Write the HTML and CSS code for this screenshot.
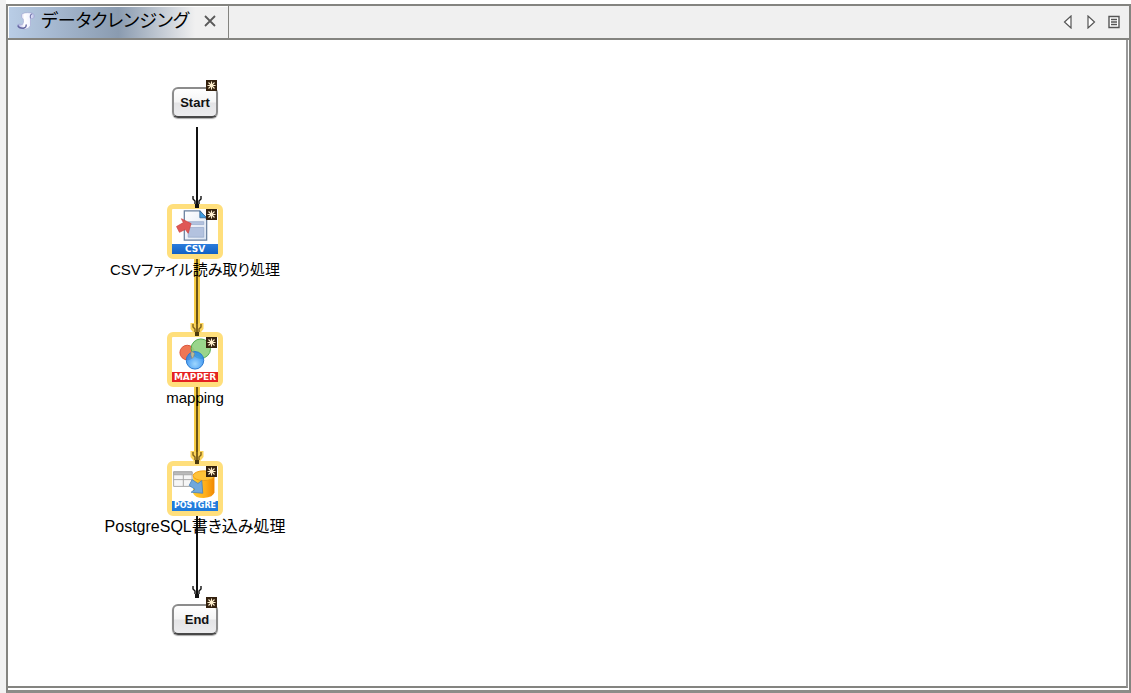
FILE: index.html
```html
<!DOCTYPE html>
<html lang="ja">
<head>
<meta charset="utf-8">
<title>データクレンジング</title>
<link rel="stylesheet" href="styles.css">
</head>
<body>
<main class="frame">
  <header class="tabbar">
    <div class="tab">
      <svg class="scroll-icon" width="18" height="20" viewBox="0 0 20 20" aria-hidden="true">
        <defs><linearGradient id="scroll" x1="0" x2="1"><stop offset="0" stop-color="#a3a5df"/><stop offset=".4" stop-color="#fff"/><stop offset=".7" stop-color="#f4f5ff"/><stop offset="1" stop-color="#b9bde8"/></linearGradient></defs>
        <path d="M5 3Q7 0 16 1Q20 2 19 6Q18 8 15 7L15 15Q13 19 9 19L3 18Q0 17 1 14Q2 13 6 14Q8 12 7 8Q4 6 5 3Z" fill="url(#scroll)" stroke="#9da1cf" stroke-width=".6"/>
        <path d="M15 7Q14 3 17 2" fill="none" stroke="#7376ad" stroke-width="1.2"/>
        <path d="M1 15Q2 18 7 18Q11 17 10 14" fill="none" stroke="#6366a0" stroke-width="1.6"/>
      </svg>
      <span class="tab-title">データクレンジング</span>
      <button class="icon-button" type="button" aria-label="閉じる"><svg width="12" height="12" viewBox="0 0 12 12"><path d="M1 1L11 11M11 1L1 11" stroke="#5a5a5a" stroke-width="1.8"/></svg></button>
    </div>
    <nav class="tab-tools">
      <button class="icon-button" type="button" aria-label="前へ"><svg width="12" height="14" viewBox="0 0 12 14"><path d="M9 1V13L2.500 7Z" fill="#fff" stroke="#555" stroke-width="1.2"/></svg></button>
      <button class="icon-button" type="button" aria-label="次へ"><svg width="12" height="14" viewBox="0 0 12 14"><path d="M3 1V13L9.500 7Z" fill="#fff" stroke="#555" stroke-width="1.2"/></svg></button>
      <button class="icon-button" type="button" aria-label="一覧"><svg width="12" height="14" viewBox="0 0 12 14"><path d="M1 1.500H11V12.500H1ZM3 4.500H9M3 7H9M3 9.500H9" fill="#fff" stroke="#555" stroke-width="1.400"/></svg></button>
    </nav>
  </header>

  <section class="canvas">
    <svg class="flows" width="300" height="640" viewBox="0 0 300 640" aria-hidden="true">
      <path d="M189 216V296M189 344V424" stroke="#f5cb45" stroke-width="6"/>
      <path d="M189 87V164M189 473V557" stroke="#111" stroke-width="2"/>
      <path d="M189 216V296M189 344V424" stroke="#6b5314" stroke-width="2"/>
    </svg>

    <div class="node node-start">
      <button class="terminal" type="button">Start</button>
      <svg class="badge" width="11" height="11" viewBox="0 0 11 11"><path d="M0 0H11V11H0Z" fill="#33200d"/><path d="M5.500 1.500V9.500M1.500 5.500H9.500M2.500 2.500L8.500 8.500M8.500 2.500L2.500 8.500" stroke="#fff0cf" stroke-width="1.100"/></svg>
    </div>

    <div class="node node-csv">
      <div class="tile">
        <svg class="picture" width="46" height="35" viewBox="0 0 46 36" aria-hidden="true">
          <defs><linearGradient id="page" y2="1"><stop stop-color="#fff"/><stop offset="1" stop-color="#dbe4f2"/></linearGradient></defs>
          <path d="M12 2H28L35 10V32H12Z" fill="url(#page)" stroke="#69809f" stroke-width="1.300"/>
          <path d="M28 2V9H35Z" fill="#3e9de0" stroke="#416f9e"/>
          <path d="M16 13H32V16H16ZM16 19H32V29H16Z" fill="#b3c2df" stroke="#95a8ca" stroke-width=".7"/>
          <path d="M4 18L11 14L9 10L19 15L16 25L13 21L7 24Z" fill="#df5756" stroke="#c9413f" stroke-width=".7"/>
        </svg>
        <span class="kind kind-csv">CSV</span>
        <svg class="badge" width="11" height="11" viewBox="0 0 11 11"><path d="M0 0H11V11H0Z" fill="#33200d"/><path d="M5.500 1.500V9.500M1.500 5.500H9.500M2.500 2.500L8.500 8.500M8.500 2.500L2.500 8.500" stroke="#fff0cf" stroke-width="1.100"/></svg>
      </div>
      <span class="label label-compact">CSVファイル読み取り処理</span>
    </div>

    <div class="node node-mapper">
      <div class="tile">
        <svg class="picture" width="46" height="35" viewBox="0 0 46 36" aria-hidden="true">
          <defs><radialGradient id="blue" cy=".7"><stop stop-color="#8ed0ff"/><stop offset="1" stop-color="#2a8df0"/></radialGradient></defs>
          <circle cx="15" cy="16" r="7.500" fill="#ef7654" stroke="#d95038"/>
          <circle cx="29" cy="12" r="10" fill="#8fd080" fill-opacity=".9" stroke="#50a94b"/>
          <circle cx="23" cy="24" r="9" fill="url(#blue)" fill-opacity=".85" stroke="#2877cd"/>
          <path d="M19 15Q21 15 22.500 17Q22 21 20 22Q18 19 19 15Z" fill="#d8c88b" fill-opacity=".8" stroke="#967f63" stroke-width=".6"/>
        </svg>
        <span class="kind kind-mapper">MAPPER</span>
        <svg class="badge" width="11" height="11" viewBox="0 0 11 11"><path d="M0 0H11V11H0Z" fill="#33200d"/><path d="M5.500 1.500V9.500M1.500 5.500H9.500M2.500 2.500L8.500 8.500M8.500 2.500L2.500 8.500" stroke="#fff0cf" stroke-width="1.100"/></svg>
      </div>
      <span class="label label-compact">mapping</span>
    </div>

    <div class="node node-postgre">
      <div class="tile">
        <svg class="picture" width="46" height="35" viewBox="0 0 46 36" aria-hidden="true">
          <defs><linearGradient id="drum"><stop stop-color="#ffcd31"/><stop offset=".6" stop-color="#ffac18"/><stop offset="1" stop-color="#ef8700"/></linearGradient></defs>
          <path d="M1 6H20V21H1Z" fill="#f6f6f6" stroke="#a7a7a7"/>
          <path d="M1 6H20V9H1ZM1 14H20M11 9V21" fill="#bbb" stroke="#a7a7a7"/>
          <path d="M21 10V28Q23 33 32 33Q42 32 43 27V10Z" fill="url(#drum)"/>
          <ellipse cx="32" cy="10" rx="11" ry="5" fill="#ffc238" stroke="#f09d16"/>
          <path d="M17 20L20 14L26 18L30 15L31 28L19 27L23 24Z" fill="#70a8dc" stroke="#477fb8" stroke-width=".8"/>
        </svg>
        <span class="kind kind-postgre">POSTGRE</span>
        <svg class="badge" width="11" height="11" viewBox="0 0 11 11"><path d="M0 0H11V11H0Z" fill="#33200d"/><path d="M5.500 1.500V9.500M1.500 5.500H9.500M2.500 2.500L8.500 8.500M8.500 2.500L2.500 8.500" stroke="#fff0cf" stroke-width="1.100"/></svg>
      </div>
      <span class="label">PostgreSQL書き込み処理</span>
    </div>

    <div class="node node-end">
      <button class="terminal terminal-end" type="button">End</button>
      <svg class="badge" width="11" height="11" viewBox="0 0 11 11"><path d="M0 0H11V11H0Z" fill="#33200d"/><path d="M5.500 1.500V9.500M1.500 5.500H9.500M2.500 2.500L8.500 8.500M8.500 2.500L2.500 8.500" stroke="#fff0cf" stroke-width="1.100"/></svg>
    </div>

    <svg class="flows" width="300" height="640" viewBox="0 0 300 640" aria-hidden="true">
      <defs>
        <g id="head"><path d="M-4 -12V-9L-2 -7V-4M4 -12V-9L2 -7V-4" fill="none" stroke-width="1.400"/><path d="M0 -12V-4" stroke-width="2"/><path d="M-2 -4H2V0H-2Z" stroke="none"/></g>
      </defs>
      <path d="M185 283V288L189 293L193 288V283M185 411V416L189 421L193 416V411" fill="none" stroke="#fbd45c" stroke-width="5"/>
      <use href="#head" x="189" y="168" stroke="#111" fill="#111"/>
      <use href="#head" x="189" y="558" stroke="#111" fill="#111"/>
      <use href="#head" x="189" y="296" stroke="#80631a" fill="#4c3a0d"/>
      <use href="#head" x="189" y="424" stroke="#80631a" fill="#4c3a0d"/>
    </svg>
  </section>
</main>
</body>
</html>
```
FILE: styles.css
```css
* { box-sizing: border-box; }

body {
  margin: 0;
  min-height: 100vh;
  display: flex;
  padding: 4px 0 0 6px;
  background: linear-gradient(to right, #f2f2f2 6px, #fff 6px);
  font-family: "Liberation Sans", "Noto Sans CJK JP", sans-serif;
  color: #000;
}

.frame {
  flex: 1;
  display: flex;
  flex-direction: column;
  border: 2px solid #848480;
  border-bottom: 3px solid #8c8c88;
  background: #fff;
}

.tabbar {
  display: flex;
  justify-content: space-between;
  height: 34px;
  background: #f0f0f0;
  border-bottom: 2px solid #848480;
}

.tab {
  display: flex;
  align-items: center;
  gap: 6px;
  width: 220px;
  padding: 0 12px 3px 8px;
  border: solid #fff;
  border-width: 1px 0 0 1px;
  box-shadow: 1px 0 #848480;
  background: linear-gradient(to right, #b9cde6 0, #8a9bb0 50%, #f0f0f0 85%);
}

.scroll-icon { flex: none; }

.tab-title {
  flex: 1;
  font-size: 18px;
  line-height: 24px;
  white-space: nowrap;
  font-feature-settings: "palt";
}

.tab-tools {
  display: flex;
  align-items: center;
  gap: 11px;
  padding: 0 9px 1px 0;
}

.icon-button {
  display: flex;
  padding: 0;
  border: 0;
  background: none;
}

.canvas {
  position: relative;
  flex: 1;
  min-height: 640px;
  margin: 0 1px 2px 0;
  border-right: 2px solid #999;
  border-bottom: 2px solid #848480;
}

.flows {
  position: absolute;
  left: 0;
  top: 0;
  pointer-events: none;
}

.node {
  position: absolute;
  left: 87px;
  width: 200px;
  display: flex;
  flex-direction: column;
  align-items: center;
  gap: 1px;
}

.node-start { top: 47px; }
.node-csv { top: 164px; }
.node-mapper { top: 292px; }
.node-postgre { top: 421px; }
.node-end { top: 564px; }

.terminal {
  width: 46px;
  height: 31px;
  padding: 0;
  border: 2px solid #8c8c8c;
  border-bottom-color: #484848;
  border-radius: 6px;
  background: linear-gradient(#fff 0, #f5f5f5 48%, #e4e4e6 52%, #ececee 100%);
  box-shadow: 0 1px 1px #aaa;
  font: bold 13px/20px "Liberation Sans", sans-serif;
  color: #111;
}

.terminal-end { padding-left: 4px; }

.tile {
  position: relative;
  width: 56px;
  height: 55px;
  display: flex;
  flex-direction: column;
  border: 5px solid #ffdf7c;
  border-radius: 6px;
  background: #fff;
}

.picture { flex: none; }

.kind {
  height: 10px;
  font: bold 9px/10px "DejaVu Sans", sans-serif;
  text-align: center;
  color: #fff;
}

.kind-csv { background: linear-gradient(#2b7cdd, #1261c4); }
.kind-mapper { background: #e52222; }
.kind-postgre {
  background: #207bdc;
  font-size: 8px;
}

.badge {
  position: absolute;
  top: 0;
  right: 1px;
}

.node-start .badge,
.node-end .badge {
  top: -7px;
  right: 78px;
}

.label {
  font-size: 16px;
  line-height: 20px;
  white-space: nowrap;
  font-feature-settings: "palt";
}

.label-compact { font-size: 15px; }
```
